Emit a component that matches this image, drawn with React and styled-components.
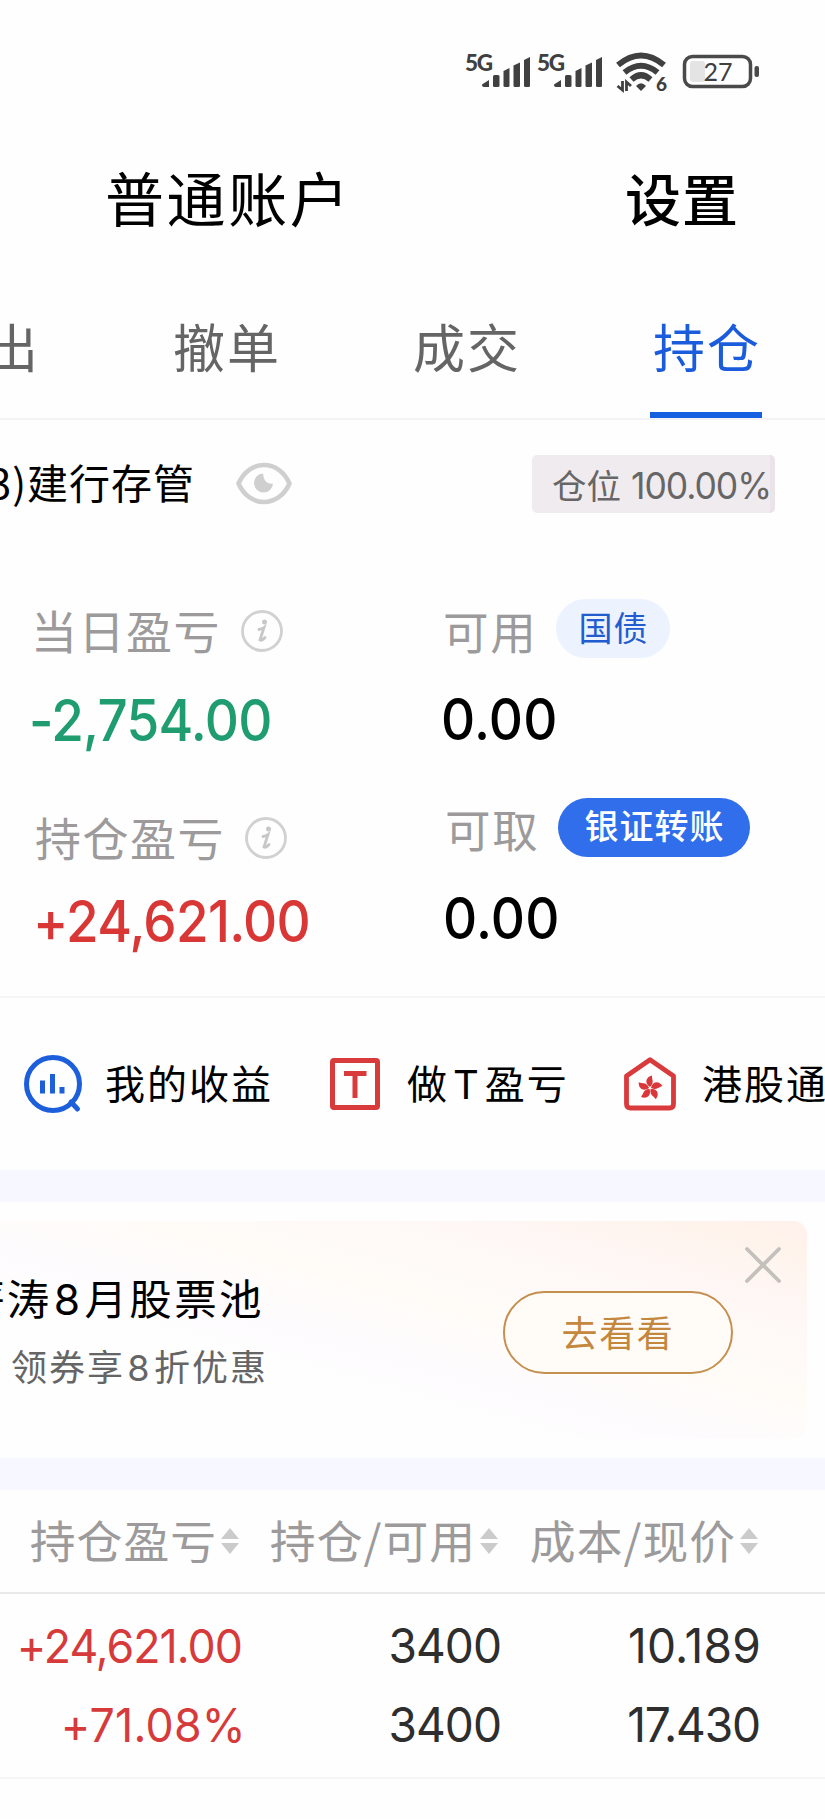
import styled, { createGlobalStyle } from "styled-components";

const GlobalStyle = createGlobalStyle`
  * {
    box-sizing: border-box;
  }

  body {
    margin: 0;
    background-color: #fefefe;
    font-family: Inter, "Noto Sans CJK SC", sans-serif;
    color: #000;
    overflow-x: hidden;
  }
`;

const StyledScreen = styled.div`
  width: 825px;
  height: 1819px;
  overflow: hidden;
  background-color: #fefefe;
  white-space: nowrap;
`;

const StyledCjk = styled.span`
  font-family: "Noto Sans CJK SC", sans-serif;
  font-size: ${({ $size }) => $size}px;
  font-weight: ${({ $weight }) => $weight || 400};
  letter-spacing: ${({ $spacing }) => $spacing || 0}px;
  line-height: 60px;
  padding-bottom: ${({ $lift }) => ($lift || 0) * 2}px;
  color: ${({ $color }) => $color || "inherit"};
`;

const StyledLatin = styled.span`
  margin: 0 ${({ $gap }) => $gap}px;
  font-family: Inter, sans-serif;
`;

const StyledStatusBar = styled.header`
  display: flex;
  height: 130px;
  padding: 50px 0 0 464px;

  svg {
    overflow: visible;
  }
`;

const StyledTitleBar = styled.div`
  display: flex;
  align-items: center;
  justify-content: space-between;
  height: 140px;
  padding: 0 86px 0 105px;
`;

const StyledTabs = styled.nav`
  display: grid;
  grid-template-columns: 105px 240px 240px 240px;
  height: 150px;
  border-bottom: 2px solid #f5f2f5;
`;

const StyledTab = styled.button`
  display: flex;
  flex-direction: column;
  justify-content: space-between;
  align-items: center;
  width: 112px;
  height: 148px;
  padding: 46px 0 0 2px;
  margin-left: ${({ $shift }) => $shift || 65}px;
  border: none;
  background-color: transparent;
  color: ${({ $active }) => ($active ? "#1a5cdc" : "#656565")};
`;

const StyledUnderline = styled.div`
  width: 112px;
  height: 6px;
  margin-left: -2px;
  background-color: #1460e0;
`;

const StyledAccountRow = styled.section`
  display: flex;
  align-items: center;
  height: 129px;
  padding: 0 50px 2px 0;
`;

const StyledAccountName = styled.div`
  display: flex;
  justify-content: flex-end;
  width: 195px;
  margin-right: 41px;
`;

const StyledPosition = styled.div`
  display: flex;
  align-items: center;
  width: 243px;
  height: 58px;
  margin-left: auto;
  padding: 3px 0 0 20px;
  border-right: 5px solid #eae4e9;
  border-radius: 5px;
  background-color: #f0ebef;
  color: #666;
`;

const StyledPercent = styled.span`
  margin-left: 10px;
  font-size: 37px;
  letter-spacing: -1.1px;
  transform: scaleX(0.96);
  transform-origin: left;
`;

const StyledSummary = styled.section`
  display: grid;
  grid-template-columns: 412px 1fr;
  height: 449px;
  padding: 40px 0 0 31px;
  border-bottom: 2px solid #f5f5f6;
`;

const StyledStat = styled.div`
  height: ${({ $height }) => $height}px;
  padding-left: ${({ $indent }) => $indent || 0}px;
`;

const StyledStatLabel = styled.div`
  display: flex;
  align-items: center;
  height: 84px;
  color: #9c9a9b;

  svg {
    margin-left: 20px;
  }
`;

const StyledStatValue = styled.div`
  font-size: 57px;
  font-weight: 450;
  line-height: 76px;
  margin: ${({ $top }) => $top || 10}px 0 0 -2px;
  letter-spacing: ${({ $spacing }) => $spacing || -0.8}px;
  color: ${({ $color }) => $color || "#000"};
  transform: scaleX(0.93);
  transform-origin: left;
`;

const StyledPill = styled.button`
  display: flex;
  align-items: center;
  justify-content: center;
  width: ${({ $width }) => $width}px;
  height: 59px;
  margin: -6px 0 0 19px;
  padding: 0;
  border: none;
  border-radius: 30px;
  background-color: ${({ $solid }) => ($solid ? "#316eec" : "#ecf2fe")};
  color: ${({ $solid }) => ($solid ? "#fff" : "#215dcf")};
`;

const StyledFeatures = styled.section`
  display: flex;
  align-items: center;
  height: 172px;
  padding-left: 24px;
`;

const StyledFeature = styled.div`
  display: flex;
  align-items: center;
  flex: none;
  width: ${({ $width }) => $width}px;
  gap: ${({ $gap }) => $gap}px;
`;

const StyledBand = styled.div`
  height: 32px;
  background-color: #f6f7ff;
`;

const StyledBannerSection = styled.section`
  height: 256px;
  padding: 19px 18px 0 0;
`;

const StyledBanner = styled.div`
  position: relative;
  display: flex;
  justify-content: space-between;
  height: 218px;
  padding: 46px 74px 0 0;
  border-radius: 0 14px 14px 0;
  background: linear-gradient(
    to top right,
    #fefefe 34%,
    #fefbfe 44%,
    #fffcf8 58%,
    #fef7f6 78%,
    #fff4ec 92%,
    #fff0eb 100%
  );
`;

const StyledBannerText = styled.div`
  display: flex;
  flex-direction: column;
  align-items: flex-end;
  width: 268px;
  gap: 5px;
`;

const StyledBannerTitle = styled.div`
  margin-right: 4px;
`;

const StyledBannerButton = styled.button`
  display: flex;
  align-items: center;
  justify-content: center;
  width: 230px;
  height: 83px;
  margin-top: 24px;
  padding: 0;
  border: 2px solid #c4904f;
  border-radius: 42px;
  background-color: #fffcf8;
  color: #c4873e;
`;

const StyledClose = styled.svg`
  position: absolute;
  top: 26px;
  right: 26px;
`;

const StyledTable = styled.section`
  display: grid;
  grid-template-columns: 242px 259px 260px;
`;

const StyledTableHead = styled(StyledTable)`
  height: 104px;
  border-bottom: 2px solid #e9e9e9;
`;

const StyledHeadCell = styled.div`
  display: flex;
  align-items: center;
  justify-content: flex-end;
  padding-right: 2px;
  color: #9c9a9b;
  gap: 3px;
`;

const StyledTableBody = styled(StyledTable)`
  grid-template-rows: 79px 80px;
  height: 185px;
  padding-top: 12px;
  border-bottom: 2px solid #f6f6f6;
`;

const StyledCell = styled.div`
  margin-right: ${({ $end }) => $end || 0}px;
  font-size: ${({ $gain }) => ($gain ? 47 : 48.5)}px;
  line-height: 80px;
  text-align: right;
  letter-spacing: ${({ $spacing }) => $spacing || -1}px;
  color: ${({ $gain }) => ($gain ? "#d63a3a" : "#2e2e2e")};
  transform: scaleX(0.95);
  transform-origin: right;
`;

function Signal() {
  return (
    <svg width="72" height="44" viewBox="0 0 72 44" fill="#404040">
      <text x="1" y="20.500" fontSize="22.500" fontWeight="900" fontFamily="Lato" textLength="28">
        5G
      </text>
      <path d="M18 34.500 L25 30 V37 H20 Q18 37 18 35Z" />
      <rect x="29" y="25" width="6.500" height="12" rx="1.500" />
      <path d="M39.500 21 L45.500 18 V36 Q45.500 37 44 37 H41 Q39.500 37 39.500 36Z" />
      <path d="M49.500 15.500 L56 12.500 V36 Q56 37 54.500 37 H51 Q49.500 37 49.500 36Z" />
      <path d="M60 10 L66 7 V36 Q66 37 64.500 37 H61.500 Q60 37 60 36Z" />
    </svg>
  );
}

function Wifi() {
  return (
    <svg width="54" height="44" viewBox="0 0 54 44" fill="none" stroke="#404040">
      <path d="M3 15 Q26 -4 49 15" strokeWidth="6" />
      <path d="M9.500 22.500 Q26 9 42.500 22.500" strokeWidth="6" />
      <path d="M16.500 29.500 Q26 21 35.500 29.500" strokeWidth="6" />
      <path d="M21 36 Q26 30.500 31 36 L26 41Z" fill="#404040" stroke="none" />
      <path d="M7.500 31 V40 L2.500 36 M11.500 41 V32 L16 36" strokeWidth="2.800" />
      <text x="41" y="41" fontSize="19" fontWeight="900" fontFamily="Lato" fill="#404040" stroke="none">
        6
      </text>
    </svg>
  );
}

function Battery() {
  return (
    <svg width="80" height="44" viewBox="0 0 80 44">
      <rect x="3.500" y="6.500" width="66" height="30" rx="8" fill="none" stroke="#4a4a4a" strokeWidth="3.500" />
      <rect x="9" y="11" width="15" height="21" rx="3" fill="#e4e4e4" />
      <rect x="73.500" y="16" width="4.500" height="11" rx="2" fill="#4a4a4a" />
      <text x="22.500" y="31" fontSize="25" fontFamily="Lato" fill="#404040">
        27
      </text>
    </svg>
  );
}

function Eye() {
  return (
    <svg width="57" height="44" viewBox="0 0 57 44">
      <path
        d="M2.500 21.500 C8 9 18 3 28 3 S48 9 53.500 21.500 C48 34 38 40 28 40 S8 34 2.500 21.500Z"
        fill="none"
        stroke="#cfcfcf"
        strokeWidth="4.600"
        strokeLinejoin="round"
      />
      <path d="M27 11.500 A9.500 9.500 0 1 0 37 21.500 Q28 23 27 11.500Z" fill="#cfcfcf" />
    </svg>
  );
}

function Info() {
  return (
    <svg width="42" height="42" viewBox="0 0 42 42" fill="none" stroke="#d2d0d0" strokeLinecap="round">
      <circle cx="21" cy="21" r="19.500" strokeWidth="2.800" />
      <circle cx="23.500" cy="12" r="2.500" fill="#c8c6c6" stroke="none" />
      <path d="M18 19.500 Q21 19 23 17.500 L19 30 Q21 31 24 27.500" stroke="#c8c6c6" strokeWidth="2.800" />
    </svg>
  );
}

function ProfitIcon() {
  return (
    <svg width="58" height="58" viewBox="0 0 58 58" fill="none" stroke="#1d5fdb">
      <circle cx="29" cy="29" r="26.500" strokeWidth="5" />
      <path d="M47 47 L53.500 54" strokeWidth="5" strokeLinecap="round" />
      <path d="M18.500 25.500 V38.500 M28.500 19 V38.500 M38 32 V38.500" strokeWidth="5" />
    </svg>
  );
}

function TIcon() {
  return (
    <svg width="50" height="52" viewBox="0 0 50 52" fill="none" stroke="#d93a3c">
      <rect x="2.500" y="2.500" width="45" height="47" rx="1.500" strokeWidth="5" />
      <path d="M14 15.500 H36.500 M25 15.500 V40" strokeWidth="5" />
    </svg>
  );
}

function HouseIcon() {
  return (
    <svg width="52" height="54" viewBox="0 0 52 54" fill="none">
      <path
        d="M26 2.800 L49.500 19 V47 Q49.500 51 45.500 51 H6.500 Q2.500 51 2.500 47 V19Z"
        stroke="#d93a3c"
        strokeWidth="4.800"
        strokeLinejoin="round"
      />
      {[0, 72, 144, 216, 288].map((angle) => (
        <path
          key={angle}
          d="M26 30 C20 26 22 20 28 18.500 C27.500 23 31 25 26 30Z"
          transform={`rotate(${angle} 26 31)`}
          fill="#d9373a"
        />
      ))}
    </svg>
  );
}

function SortArrows() {
  return (
    <svg width="20" height="28" viewBox="0 0 20 28" fill="#cbcbcb">
      <path d="M10 1 L19 12 H1Z" />
      <path d="M1 16 H19 L10 27Z" />
    </svg>
  );
}

const StyledSpacer = styled.div`
  width: ${({ $width }) => $width}px;
`;

const tabs = [
  { name: "出", shift: -44 },
  { name: "撤单" },
  { name: "成交" },
  { name: "持仓", active: true },
];

const columns = ["持仓盈亏", "持仓/可用", "成本/现价"];

export default function App() {
  return (
    <>
      <GlobalStyle />
      <StyledScreen>
        <StyledStatusBar>
          <Signal />
          <Signal />
          <StyledSpacer $width={7} />
          <Wifi />
          <StyledSpacer $width={12} />
          <Battery />
        </StyledStatusBar>

        <StyledTitleBar>
          <StyledCjk $size={59} $spacing={2.6} $lift={3}>
            普通账户
          </StyledCjk>
          <StyledCjk $size={56} $spacing={1} $weight={500} $lift={3}>
            设置
          </StyledCjk>
        </StyledTitleBar>

        <StyledTabs>
          {tabs.map((tab) => (
            <StyledTab key={tab.name} $active={tab.active} $shift={tab.shift}>
              <StyledCjk $size={52} $spacing={2}>
                {tab.name}
              </StyledCjk>
              {tab.active && <StyledUnderline />}
            </StyledTab>
          ))}
        </StyledTabs>

        <StyledAccountRow>
          <StyledAccountName>
            <StyledCjk $size={41} $spacing={1} $lift={3}>
              3)建行存管
            </StyledCjk>
          </StyledAccountName>
          <Eye />
          <StyledPosition>
            <StyledCjk $size={34.5} $lift={1}>
              仓位
            </StyledCjk>
            <StyledPercent>100.00%</StyledPercent>
          </StyledPosition>
        </StyledAccountRow>

        <StyledSummary>
          <div>
            <StyledStat $height={207}>
              <StyledStatLabel>
                <StyledCjk $size={46} $spacing={1.5} $lift={2}>
                  当日盈亏
                </StyledCjk>
                <Info />
              </StyledStatLabel>
              <StyledStatValue $color="#1f9d70">-2,754.00</StyledStatValue>
            </StyledStat>
            <StyledStat $height={200} $indent={4}>
              <StyledStatLabel>
                <StyledCjk $size={46} $spacing={1.5} $lift={2}>
                  持仓盈亏
                </StyledCjk>
                <Info />
              </StyledStatLabel>
              <StyledStatValue $color="#d93636" $top={4}>
                +24,621.00
              </StyledStatValue>
            </StyledStat>
          </div>
          <div>
            <StyledStat $height={199}>
              <StyledStatLabel>
                <StyledCjk $size={45.5} $spacing={1.7} $lift={1}>
                  可用
                </StyledCjk>
                <StyledPill $width={114}>
                  <StyledCjk $size={34} $spacing={1} $lift={1}>
                    国债
                  </StyledCjk>
                </StyledPill>
              </StyledStatLabel>
              <StyledStatValue $top={9} $spacing={0.2}>
                0.00
              </StyledStatValue>
            </StyledStat>
            <StyledStat $height={200} $indent={2}>
              <StyledStatLabel>
                <StyledCjk $size={45.5} $spacing={1.7} $lift={2}>
                  可取
                </StyledCjk>
                <StyledPill $width={192} $solid>
                  <StyledCjk $size={34} $spacing={1} $weight={500} $lift={2}>
                    银证转账
                  </StyledCjk>
                </StyledPill>
              </StyledStatLabel>
              <StyledStatValue $top={9} $spacing={0.2}>
                0.00
              </StyledStatValue>
            </StyledStat>
          </div>
        </StyledSummary>

        <StyledFeatures>
          <StyledFeature $width={306} $gap={23}>
            <ProfitIcon />
            <StyledCjk $size={40} $spacing={2} $lift={2}>
              我的收益
            </StyledCjk>
          </StyledFeature>
          <StyledFeature $width={294} $gap={27}>
            <TIcon />
            <StyledCjk $size={40} $spacing={2} $lift={1}>
              做<StyledLatin $gap={4}>T</StyledLatin>盈亏
            </StyledCjk>
          </StyledFeature>
          <StyledFeature $width={260} $gap={26}>
            <HouseIcon />
            <StyledCjk $size={40} $spacing={2} $lift={2}>
              港股通
            </StyledCjk>
          </StyledFeature>
        </StyledFeatures>

        <StyledBand />

        <StyledBannerSection>
          <StyledBanner>
            <StyledBannerText>
              <StyledBannerTitle>
                <StyledCjk $size={42.5} $spacing={2.4}>
                  薪涛<StyledLatin $gap={2}>8</StyledLatin>月股票池
                </StyledCjk>
              </StyledBannerTitle>
              <StyledCjk $size={36} $spacing={2} $color="#656565">
                领券享<StyledLatin $gap={2.4}>8</StyledLatin>折优惠
              </StyledCjk>
            </StyledBannerText>
            <StyledBannerButton>
              <StyledCjk $size={36} $spacing={1.7} $lift={2}>
                去看看
              </StyledCjk>
            </StyledBannerButton>
            <StyledClose width="36" height="36" viewBox="0 0 36 36">
              <path d="M2 2 L34 34 M34 2 L2 34" stroke="#c4c0bc" strokeWidth="3.800" strokeLinecap="round" />
            </StyledClose>
          </StyledBanner>
        </StyledBannerSection>

        <StyledBand />

        <StyledTableHead>
          {columns.map((column) => (
            <StyledHeadCell key={column}>
              <StyledCjk $size={45.8} $spacing={1} $lift={2.5}>
                {column}
              </StyledCjk>
              <SortArrows />
            </StyledHeadCell>
          ))}
        </StyledTableHead>
        <StyledTableBody>
          <StyledCell $gain>+24,621.00</StyledCell>
          <StyledCell>3400</StyledCell>
          <StyledCell $spacing={0.2}>10.189</StyledCell>
          <StyledCell $gain $spacing={0.3} $end={-4}>
            +71.08%
          </StyledCell>
          <StyledCell>3400</StyledCell>
          <StyledCell $spacing={-1.2} $end={1}>
            17.430
          </StyledCell>
        </StyledTableBody>
      </StyledScreen>
    </>
  );
}
